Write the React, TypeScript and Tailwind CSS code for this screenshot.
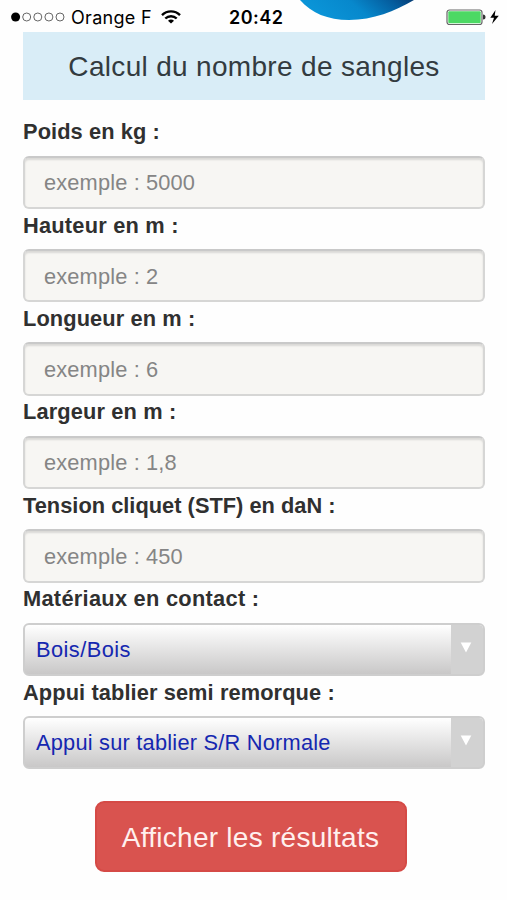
import React from 'react';

const fields = [
  { label: 'Poids en kg :', hint: 'exemple : 5000', tracking: 'tracking-[0.1px]' },
  { label: 'Hauteur en m :', hint: 'exemple : 2', tracking: 'tracking-[0.22px]' },
  { label: 'Longueur en m :', hint: 'exemple : 6', tracking: 'tracking-[0.1px]' },
  { label: 'Largeur en m :', hint: 'exemple : 1,8', tracking: 'tracking-[0.14px]' },
  { label: 'Tension cliquet (STF) en daN :', hint: 'exemple : 450', tracking: 'tracking-[0.02px]' },
];

const selects = [
  { label: 'Matériaux en contact :', value: 'Bois/Bois', tracking: 'tracking-[0.28px]', valueTracking: 'tracking-[0.45px]' },
  { label: 'Appui tablier semi remorque :', value: 'Appui sur tablier S/R Normale', tracking: 'tracking-[0.1px]', valueTracking: 'tracking-[0.22px]' },
];

function Caption({ text, tracking }: { text: string; tracking: string }) {
  return (
    <span className={`flex h-10 items-center whitespace-nowrap pb-[6px] text-[21.8px] font-bold text-[#303030] ${tracking}`}>{text}</span>
  );
}

function StatusBar() {
  return (
    <header className="relative flex h-8 items-center overflow-hidden pt-[2px] text-black">
      <svg className="absolute left-[296px] top-0" width="124" height="22" viewBox="0 0 124 22">
        <defs>
          <linearGradient id="globe" x1="0" x2="1" y1="0.2" y2="0">
            <stop offset="0" stopColor="#0b96d9" />
            <stop offset="0.45" stopColor="#0788cc" />
            <stop offset="0.8" stopColor="#055c9d" />
            <stop offset="1" stopColor="#063d75" />
          </linearGradient>
        </defs>
        <path d="M4 0C15 13 32 20 53 20C77 20 99 11 118 0Z" fill="url(#globe)" />
      </svg>
      <svg className="ml-[11px]" width="54" height="10" viewBox="0 0 54 10" fill="none" stroke="#666" strokeWidth="1">
        <circle cx="4.6" cy="5" r="4.5" fill="#000" stroke="none" />
        <circle cx="15.7" cy="5" r="4" />
        <circle cx="26.8" cy="5" r="4" />
        <circle cx="37.9" cy="5" r="4" />
        <circle cx="49" cy="5" r="4" />
      </svg>
      <span className="ml-[6px] w-[82px] whitespace-nowrap font-['Inter','Liberation_Sans',sans-serif] text-[18px] tracking-[0.3px]">Orange F</span>
      <svg className="ml-[8px]" width="20" height="14" viewBox="0 0 20 14" fill="none" stroke="#000" strokeWidth="2.4">
        <path d="M1 5.1C6 .1 14 .1 19 5.1" />
        <path d="M4.3 8.5C7.5 5.4 12.5 5.4 15.7 8.5" />
        <path d="M10 13.6L7 10.7C8.7 9.2 11.3 9.2 13 10.7Z" fill="#000" stroke="none" />
      </svg>
      <span className="ml-[48px] font-['Inter','Liberation_Sans',sans-serif] text-[18px] font-semibold tracking-[0.5px]">20:42</span>
      <svg className="absolute left-[446px] top-[9px]" width="54" height="17" viewBox="0 0 54 17">
        <rect x="1" y="1" width="35" height="14.5" rx="2.5" fill="#fff" stroke="#666" strokeWidth="1.2" />
        <rect x="2.3" y="2.3" width="32.4" height="11.9" rx="1" fill="#4cd964" />
        <path d="M37 5.5Q39.5 5.5 39.5 8T37 10.5Z" fill="#333" />
        <path d="M49.5 1L44.3 8.7H48L46 15L52.8 6.7H48.7Z" fill="#000" />
      </svg>
    </header>
  );
}

export default function App() {
  return (
    <div className="h-[900px] w-[507px] overflow-hidden bg-[#fefefe] font-['Liberation_Sans',Arial,sans-serif]">
      <StatusBar />
      <main className="px-[23px]">
        <h1 className="flex h-[68px] w-[462px] items-center justify-center whitespace-nowrap bg-[#d9edf7] pt-px text-[28px] tracking-[0.32px] text-[#333b40]">
          Calcul du nombre de sangles
        </h1>
        <form className="pt-[15.6px]" onSubmit={(event) => event.preventDefault()}>
          {fields.map((field) => (
            <label key={field.label} className="block">
              <Caption text={field.label} tracking={field.tracking} />
              <input
                placeholder={field.hint}
                className="block h-[53.4px] w-[462px] rounded-[6px] border-2 border-[#d6d6d5] border-t-[#c9c9c9] bg-[#f7f6f3] pl-[19px] pt-[2px] text-[21.8px] tracking-[0.15px] text-[#555] shadow-[inset_0_2px_2px_rgba(0,0,0,0.12)] outline-none placeholder:text-[#858585]"
              />
            </label>
          ))}
          {selects.map((select) => (
            <div key={select.label}>
              <Caption text={select.label} tracking={select.tracking} />
              <button type="button" className="flex h-[53.4px] w-[462px] overflow-hidden rounded-[6px] border-2 border-[#cecece] bg-linear-to-b from-white to-[#c9c8c8] text-left">
                <span className={`flex h-full flex-1 items-center whitespace-nowrap pl-[11px] pt-[2px] text-[21.8px] text-[#1527b0] ${select.valueTracking}`}>{select.value}</span>
                <span className="flex h-full w-[32px] justify-center bg-[#d2d2d2] pr-[2px] pt-[17px]">
                  <svg width="12" height="11" viewBox="0 0 12 11"><path d="M.7.5H11.3L6 10.5Z" fill="#fff" /></svg>
                </span>
              </button>
            </div>
          ))}
          <button type="submit" className="mx-auto mt-[31.6px] flex h-[71.5px] w-[312px] -translate-x-[3px] items-center justify-center whitespace-nowrap rounded-[9px] border-2 border-[#d54a46] bg-[#d9534f] pt-[2px] text-[28px] tracking-[0.27px] text-[#fff0ee]">
            Afficher les résultats
          </button>
        </form>
      </main>
    </div>
  );
}
